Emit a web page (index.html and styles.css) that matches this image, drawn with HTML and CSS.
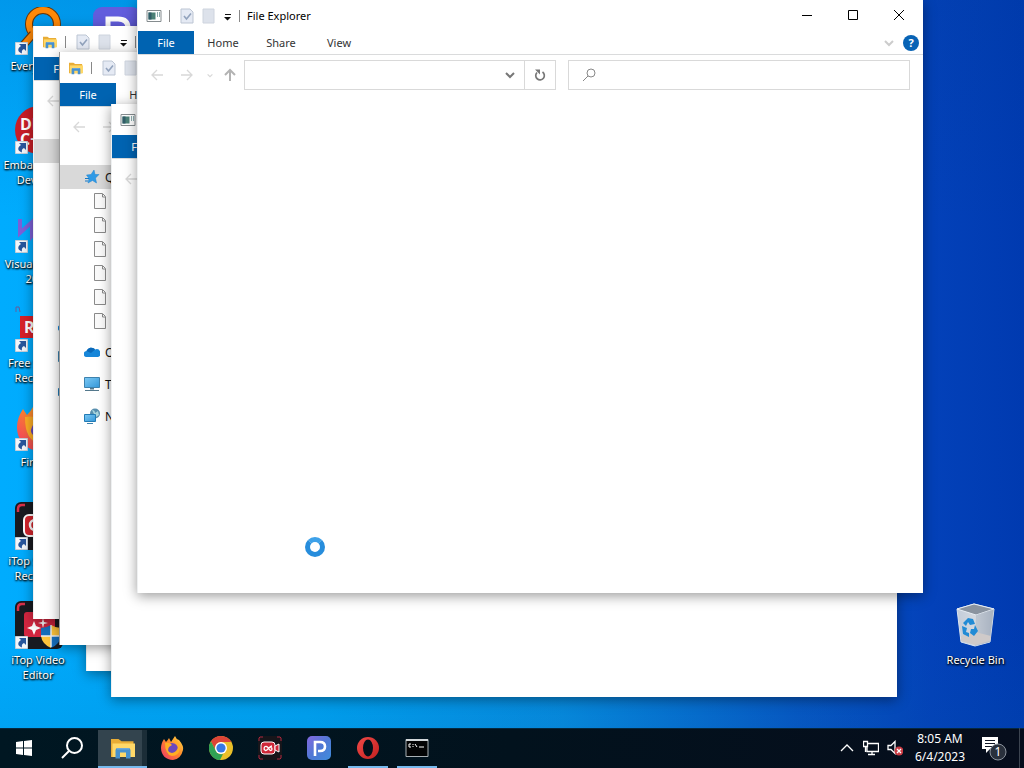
FILE: index.html
```html
<!DOCTYPE html>
<html lang="en">
<head>
<meta charset="utf-8">
<title>Desktop</title>
<link rel="stylesheet" href="styles.css">
</head>
<body>
<svg class="defs" aria-hidden="true">
  <defs>
    <linearGradient id="fire" x1="1" y1="0" x2="0" y2="1"><stop offset="0" stop-color="#ffe04a"/><stop offset=".45" stop-color="#ff8a2a"/><stop offset="1" stop-color="#f0306c"/></linearGradient>
    <linearGradient id="app" x1="0" y1="0" x2="1" y2="1"><stop offset="0" stop-color="#8468e0"/><stop offset=".5" stop-color="#5078d4"/><stop offset="1" stop-color="#3f8ddd"/></linearGradient>
    <linearGradient id="screen" x1="0" y1="0" x2="1" y2="1"><stop offset="0" stop-color="#7cc9f5"/><stop offset="1" stop-color="#3497d8"/></linearGradient>
    <linearGradient id="ring" x1="0" y1="0" x2="1" y2="1"><stop offset="0" stop-color="#f04a48"/><stop offset="1" stop-color="#c4201f"/></linearGradient>
    <linearGradient id="bin" x1="0" y1="0" x2="1" y2="0"><stop offset="0" stop-color="#c3ccda"/><stop offset=".55" stop-color="#d6dae0"/><stop offset="1" stop-color="#9ea8b8"/></linearGradient>
  </defs>
  <symbol id="shortcut" viewBox="0 0 13 13"><path fill="#f3f6fa" stroke="#c5ced8" d="M.5.5h12v12H.5z"/><path fill="#28569c" d="M4 2h7v7L9 7C7 8 6.500 9 7 11.500 2.500 10 2 6.500 6 4z"/></symbol>
  <symbol id="folder" viewBox="0 0 16 16"><path fill="#e9ad36" d="M0 2h5l2 1.500h8V14H0z"/><path fill="#ffd868" d="M1 5h15v9H1z"/><path fill="#4791cf" d="M3 15V9.500Q3 8 4.500 8h7Q13 8 13 9.500V15h-3v-4H6v4z"/><path fill="#6fa9d8" d="M4 8h8v1H4z"/></symbol>
  <symbol id="generic" viewBox="0 0 16 14"><path fill="#fff" stroke="#858c8f" d="M1 1.500h14v11H1z"/><path fill="#4b8177" d="M2.500 3.500h7v7h-7z"/><path fill="#315d68" d="M2.500 3.500h3v7h-3z"/><path stroke="#8caeb0" d="M11.500 3v5M13.500 3v5"/></symbol>
  <symbol id="check" viewBox="0 0 14 16"><path fill="#e5eaf4" stroke="#bcc5d3" d="M1 1h9l3 3v11H1z"/><path fill="none" stroke="#92a3bd" stroke-width="1.600" d="m4 8 2.500 3L11 5.500"/></symbol>
  <symbol id="blank" viewBox="0 0 14 16"><path fill="#dde2eb" stroke="#ced4de" d="M1 1h11v14H1z"/></symbol>
  <symbol id="drop" viewBox="0 0 8 10"><path fill="#111" d="M1 3h6v1H1zM0 6h7L3.500 9.500z"/></symbol>
  <symbol id="arrow-left" viewBox="0 0 12 12"><path fill="none" stroke="currentColor" stroke-width="1.300" d="M12 6H1m5-5L1 6l5 5"/></symbol>
  <symbol id="arrow-up" viewBox="0 0 12 14"><path fill="none" stroke="currentColor" stroke-width="2" d="M6 13V2M1 7l5-5 5 5"/></symbol>
  <symbol id="chev" viewBox="0 0 10 8"><path fill="none" stroke="currentColor" stroke-width="2" d="m1 2 4 4 4-4"/></symbol>
  <symbol id="star" viewBox="0 0 16 16"><path fill="#2f9ae6" stroke="#1c83d0" stroke-width=".5" d="m10 1 1 4.500h4L11.500 9l1 5L8.500 11.500 4 14l1-4.500L2.500 6l4.500-.500z"/><path stroke="#1679c5" stroke-width="1.200" d="M1 9.500h4M1 12h3"/></symbol>
  <symbol id="doc" viewBox="0 0 12 16"><path fill="#fafafa" stroke="#8a8a8a" d="M.5.5h8l3 3v12H.5z"/><path fill="none" stroke="#8a8a8a" d="M8.500 1v3H11"/></symbol>
  <symbol id="cloud" viewBox="0 0 16 12"><path fill="#1686d9" d="M3 11a3 3 0 0 1-.5-6A5 5 0 0 1 11 3.500 4 4 0 0 1 14 11z"/><path fill="#0a68b8" d="M2.500 5A5 5 0 0 1 11 3.500L7 7z"/></symbol>
  <symbol id="pc" viewBox="0 0 16 16"><path fill="url(#screen)" stroke="#3d82ae" d="M.5 1.500h15v10H.5z"/><path fill="#54788c" d="M6 12h4v1.500H6zM1 14h14v1H1z"/></symbol>
  <symbol id="net" viewBox="0 0 16 16"><circle cx="11" cy="5.500" r="5" fill="#598fae"/><path fill="#a9d5dd" d="M8 2q3 0 3 3l3-2 1 4-3 2-2-3z"/><path fill="url(#screen)" stroke="#227bb5" d="M.5 6.500h11v7H.5z"/><path stroke="#3d82ae" d="M3 15.500h6"/></symbol>
  <symbol id="firefox" viewBox="0 0 24 24"><path fill="url(#fire)" d="M1 12C1 9 2 6 4 3l2 3q2-2 3-4l2 4 4-6q1 3 4 4 5 6 4 10-2 9-10 10C6 24 1 19 1 12z"/><circle cx="12" cy="13" r="6" fill="#6a48bd"/><path fill="#ffae25" d="M5 7q5-1 7 2l-3 2q-3 5 3 6 5-1 6-6-1-5-5-8 7 2 7 9-1 8-8 8-7-1-7-13z"/></symbol>
  <symbol id="recorder" viewBox="0 0 48 48"><rect width="48" height="48" rx="6" fill="#181a20"/><path fill="none" stroke="#d8304a" stroke-width="2.500" d="M3 10V7q0-4 4-4h3m28 0h3q4 0 4 4v3M3 38v3q0 4 4 4h3m28 0h3q4 0 4-4v-3"/><rect x="9" y="13" width="24" height="21" rx="5" fill="#d4252d" stroke="#fff" stroke-width="2"/><path fill="#d4252d" stroke="#fff" stroke-width="2" d="m34 20 8-5v19l-8-5z"/><circle cx="20" cy="23" r="5" fill="none" stroke="#fff" stroke-width="2.500"/></symbol>
</svg>

<div class="screen">
  <main class="desktop">
    <nav class="shortcuts" aria-label="Desktop shortcuts">
      <a class="shortcut" href="#"><span class="picture"><svg class="art" viewBox="0 0 48 48"><circle cx="28" cy="17" r="14" fill="none" stroke="#65370b" stroke-width="8"/><circle cx="28" cy="17" r="14" fill="none" stroke="#ff8908" stroke-width="6"/><path stroke="#65370b" stroke-width="8" d="M18 27 4 43"/><path stroke="#ff8908" stroke-width="6" d="M19 26 5 42"/></svg><svg class="badge"><use href="#shortcut"/></svg></span><span class="label">Everything</span></a>
      <a class="shortcut" href="#"><span class="picture"><svg class="art" viewBox="0 0 48 48"><circle cx="24" cy="24" r="24" fill="#c91e27"/><text class="logo-text" x="5" y="24">DEV</text><text class="logo-text" x="5" y="39">C++</text></svg><svg class="badge"><use href="#shortcut"/></svg></span><span class="label">Embarcadero<br>Dev-C++</span></a>
      <a class="shortcut" href="#"><span class="picture"><svg class="art" viewBox="0 0 48 48"><path fill="none" stroke="#7d60d8" stroke-width="4" d="M5 14v14l12-11v14l13-14v14"/></svg><svg class="badge"><use href="#shortcut"/></svg></span><span class="label">Visual Studio<br>2022</span></a>
      <a class="shortcut" href="#"><span class="picture"><svg class="art" viewBox="0 0 48 48"><path fill="none" stroke="#665c9b" d="M1 8V3h3l1 5"/><path fill="#d82027" d="M5 12h38v22H5z"/><text class="logo-text" x="9" y="29">REC</text></svg><svg class="badge"><use href="#shortcut"/></svg></span><span class="label">Free Screen<br>Recorder</span></a>
      <a class="shortcut" href="#"><span class="picture"><svg class="art"><use href="#firefox"/></svg><svg class="badge"><use href="#shortcut"/></svg></span><span class="label">Firefox</span></a>
      <a class="shortcut" href="#"><span class="picture"><svg class="art"><use href="#recorder"/></svg><svg class="badge"><use href="#shortcut"/></svg></span><span class="label">iTop Screen<br>Recorder</span></a>
      <a class="shortcut" href="#"><span class="picture"><svg class="art" viewBox="0 0 48 48"><rect width="48" height="48" rx="6" fill="#181a20"/><path fill="none" stroke="#d8304a" stroke-width="2.500" d="M3 10V7q0-4 4-4h3"/><rect x="9" y="11" width="31" height="25" rx="3" fill="#d42640"/><path fill="#fff" d="m19 20 2 5 5 2-5 2-2 5-2-5-5-2 5-2zm9-3 1 4 4 1-4 1-1 4-1-4-4-1 4-1z"/><path fill="#176fbd" d="M26 27q5 0 10-3v12H26z"/><path fill="#ffc43b" d="M36 24q5 3 10 3v9H36zM26 35h10v12q-9-4-10-12z"/><path fill="#176fbd" d="M36 35h10q-1 8-10 12z"/><path stroke="#eee" stroke-width="1.500" d="M36 24v22M26 35h20"/></svg><svg class="badge"><use href="#shortcut"/></svg></span><span class="label">iTop Video<br>Editor</span></a>
      <a class="shortcut" href="#"><span class="picture"><svg class="art" viewBox="0 0 48 48"><rect width="48" height="48" rx="9" fill="#625ddd"/><path fill="none" stroke="#fff" stroke-width="5" d="M15 40V12h10q10 0 10 9t-10 9H15"/></svg></span></a>
    </nav>
    <a class="recycle" href="#"><svg class="bin" viewBox="0 0 48 48"><path fill="url(#bin)" stroke="#dce5ef" d="m5 8 17-5 20 5-4 33-15 4-14-4z"/><path fill="#8a939f" stroke="#e7edf4" d="m5 8 17-5 20 5-18 6z"/><path fill="#aeb7c5" opacity=".6" d="m24 14 18-6-4 33-15 4z"/><path fill="#cfcac9" d="m9 35 14-4 16 4-1 5-15 4-14-4z"/><g fill="#228bd5"><path d="m11 22 5-5 5 1 2 5-5 1-2-3-2 4z"/><path d="m10 25 5 2-1 4 3 1v4l-6-3z"/><path d="m23 24 3 6-4 5-4-3 1-4h3z"/></g></svg><span class="label">Recycle Bin</span></a>

    <section class="window w1" aria-label="File Explorer 1">
      <header class="titlebar"><svg class="app-icon"><use href="#folder"/></svg><i class="rule"></i><svg class="page-icon"><use href="#check"/></svg><svg class="page-icon"><use href="#blank"/></svg><svg class="drop"><use href="#drop"/></svg><i class="rule"></i></header>
      <div class="ribbon"><button class="file">File</button></div>
      <div class="tools"><svg class="arrow"><use href="#arrow-left"/></svg></div>
      <ul class="tree"><li class="selected"></li><li class="child"></li><li class="child"></li><li class="child"></li><li class="child"></li><li class="child"></li><li class="child"></li><li class="root"><svg><use href="#cloud"/></svg></li><li class="root"><svg><use href="#pc"/></svg></li><li class="root"><svg><use href="#net"/></svg></li></ul>
    </section>
    <section class="window w3" aria-label="File Explorer 3"></section>
    <section class="window w2" aria-label="File Explorer 2">
      <header class="titlebar"><svg class="app-icon"><use href="#folder"/></svg><i class="rule"></i><svg class="page-icon"><use href="#check"/></svg><svg class="page-icon"><use href="#blank"/></svg></header>
      <div class="ribbon"><button class="file">File</button><button>Home</button></div>
      <div class="tools"><svg class="arrow"><use href="#arrow-left"/></svg><svg class="arrow flip"><use href="#arrow-left"/></svg></div>
      <ul class="tree"><li class="selected"><svg><use href="#star"/></svg>Quick access</li><li class="child"><svg><use href="#doc"/></svg></li><li class="child"><svg><use href="#doc"/></svg></li><li class="child"><svg><use href="#doc"/></svg></li><li class="child"><svg><use href="#doc"/></svg></li><li class="child"><svg><use href="#doc"/></svg></li><li class="child"><svg><use href="#doc"/></svg></li><li class="root"><svg><use href="#cloud"/></svg>OneDrive</li><li class="root"><svg><use href="#pc"/></svg>This PC</li><li class="root"><svg><use href="#net"/></svg>Network</li></ul>
    </section>
    <section class="window w4" aria-label="File Explorer 4">
      <header class="titlebar"><svg class="app-icon"><use href="#generic"/></svg></header>
      <div class="ribbon"><button class="file">File</button></div>
      <div class="tools"><svg class="arrow"><use href="#arrow-left"/></svg></div>
    </section>
    <section class="window w5" aria-label="File Explorer">
      <header class="titlebar"><svg class="app-icon"><use href="#generic"/></svg><i class="rule"></i><svg class="page-icon"><use href="#check"/></svg><svg class="page-icon"><use href="#blank"/></svg><svg class="drop"><use href="#drop"/></svg><i class="rule"></i><h1>File Explorer</h1>
        <div class="controls"><button aria-label="Minimize"><svg viewBox="0 0 12 12"><path d="M1 5.500h10"/></svg></button><button aria-label="Maximize"><svg viewBox="0 0 12 12"><path d="M1.500.5h9v9h-9z"/></svg></button><button aria-label="Close"><svg viewBox="0 0 12 12"><path d="m1 0 10 10M11 0 1 10"/></svg></button></div>
      </header>
      <div class="ribbon"><button class="file">File</button><button>Home</button><button>Share</button><button>View</button><div class="help"><svg class="chev"><use href="#chev"/></svg><button aria-label="Help">?</button></div></div>
      <div class="tools"><svg class="arrow"><use href="#arrow-left"/></svg><svg class="arrow flip"><use href="#arrow-left"/></svg><svg class="tiny"><use href="#chev"/></svg><svg class="up"><use href="#arrow-up"/></svg>
        <div class="address"><input aria-label="Address"><svg class="chev"><use href="#chev"/></svg><button aria-label="Refresh"><svg viewBox="0 0 14 14"><path fill="none" stroke="#777" stroke-width="1.700" d="M9.500 4A4.300 4.300 0 1 1 4 4.500"/><path fill="#777" d="M2 1.500h5v5L5.500 5 4 3.500z"/></svg></button></div>
        <div class="search"><svg viewBox="0 0 14 14"><circle cx="9" cy="5" r="4"/><path d="M6 8 1 13"/></svg><input aria-label="Search"></div>
      </div>
    </section>
    <div class="busy" role="status" aria-label="Working"></div>
  </main>

  <footer class="taskbar">
    <button class="task start" aria-label="Start"><svg viewBox="0 0 16 16"><path fill="#fff" d="m0 2 7-1v6.500H0zm8-1 8-1v7.500H8zM0 8.500h7V15l-7-1zm8 0h8V16l-8-1z"/></svg></button>
    <button class="task search-task" aria-label="Search"><svg viewBox="0 0 22 22"><circle cx="13.500" cy="8.500" r="7.500" fill="none" stroke="#fff" stroke-width="2"/><path stroke="#fff" stroke-width="2" d="m8 14-7 7"/></svg></button>
    <button class="task active" aria-label="File Explorer"><svg><use href="#folder"/></svg></button>
    <button class="task" aria-label="Firefox"><svg><use href="#firefox"/></svg></button>
    <button class="task" aria-label="Chrome"><svg viewBox="0 0 24 24"><circle cx="12" cy="12" r="12" fill="#eabf29"/><path fill="#dc4437" d="M2 5.500Q5 0 12 0q7 0 10.400 6H12a6 6 0 0 0-5.500 8z"/><path fill="#30a254" d="M2 5.500 7 15a6 6 0 0 0 7 3l-3 6Q5 24 1.500 18-2 11 2 5.500z"/><circle cx="12" cy="12" r="6" fill="#fff"/><circle cx="12" cy="12" r="4.600" fill="#3779e5"/></svg></button>
    <button class="task" aria-label="Screen recorder"><svg viewBox="0 0 24 24"><rect width="24" height="24" rx="3" fill="#17151a"/><path fill="none" stroke="#a92840" d="M1 5V2l1-1h3m14 0h3l1 1v3M1 19v3l1 1h3m14 0h3l1-1v-3"/><rect x="3" y="6" width="14" height="12" rx="3" fill="#cf2838" stroke="#fff"/><path fill="#cf2838" stroke="#fff" d="m17 10 4-2v8l-4-2z"/><path fill="none" stroke="#fff" stroke-width="1.300" d="M14 10c-3 0-4 5-6.500 4.500-2.500-1-1.500-4.500 1-4 2 0 2.500 4 4 4 2 0 2-3 0-3"/></svg></button>
    <button class="task" aria-label="Photo app"><svg viewBox="0 0 24 24"><rect width="24" height="24" rx="5" fill="url(#app)"/><path fill="none" stroke="#fff" stroke-width="2.600" d="M8 20V6h5q5 0 5 4.500T13 15h-2"/></svg></button>
    <button class="task open" aria-label="Opera"><svg viewBox="0 0 24 24"><ellipse cx="12" cy="12" rx="11" ry="11" fill="url(#ring)"/><ellipse cx="12" cy="12" rx="5" ry="8.500" fill="#02101b"/></svg></button>
    <button class="task open" aria-label="Command Prompt"><svg viewBox="0 0 24 24"><path fill="#030405" stroke="#a9b0b4" d="M1 3.500h22v17H1z"/><path fill="#d2d7da" d="M1 3h22v2H1z"/><path fill="none" stroke="#fff" d="M6 8H4v3h2M8 8v1m0 1v1m2-3 2 3m2 0h5"/></svg></button>
    <div class="tray">
      <svg class="tray-icon" viewBox="0 0 16 16"><path d="m2 11 6-6 6 6"/></svg>
      <svg class="tray-icon" viewBox="0 0 16 16"><path d="M5 3.500h10.500v8H4V7M9 12v2.500M5 14.500h7M.5 1.500h4v5h-4zM2.500 7v5"/></svg>
      <svg class="tray-icon" viewBox="0 0 16 16"><path d="M1 5.500h3l4-4v12l-4-4H1z"/><circle cx="12" cy="11" r="4.500" fill="#ca3b43" stroke="none"/><path d="m10 9 4 4m0-4-4 4"/></svg>
      <time datetime="2023-06-04T08:05">8:05 AM<br>6/4/2023</time>
      <button class="notice" aria-label="1 notification"><svg viewBox="0 0 26 26"><path fill="#fff" d="M1 2h16v12H9l-4 4v-4H1z"/><path stroke="#101726" d="M4 5.500h10M4 8.500h10M4 11.500h7"/><circle cx="17" cy="17" r="8" fill="#29303c" stroke="#8b929c"/><text x="17" y="21" text-anchor="middle">1</text></svg></button>
    </div>
  </footer>
</div>
</body>
</html>
```
FILE: styles.css
```css
* { box-sizing: border-box; }
body { margin: 0; font: 11px/15px "Noto Sans", sans-serif; color: #111; }
button, input { font: inherit; border: 0; background: none; padding: 0; }
svg { display: block; flex: none; }
.defs { position: absolute; width: 0; height: 0; }
.screen { height: 100vh; display: flex; flex-direction: column; overflow: hidden; }
.desktop {
  position: relative; flex: 1; min-height: 0; overflow: hidden;
  background:
    linear-gradient(180deg, rgba(0, 60, 150, .18), transparent 30%, transparent 85%, rgba(0, 90, 160, .12)),
    linear-gradient(90deg, #00acfe 0%, #00a5f4 30%, #078ce0 55%, #0757c4 78%, #0341b9 91%, #003ab0 100%);
}
.shortcuts { height: 100%; padding-top: 7px; display: flex; flex-flow: column wrap; align-content: flex-start; }
.shortcut { width: 78px; height: 99px; flex: none; }
.shortcut, .recycle { color: #fff; text-decoration: none; text-align: center; }
.picture { position: relative; display: block; width: 48px; height: 48px; margin: 0 15px; }
.art { width: 48px; height: 48px; }
.badge { position: absolute; left: 0; bottom: 0; width: 13px; height: 13px; }
.label { display: block; margin: 3px 2px 0 0; text-shadow: 1px 1px 2px #000, 0 1px 2px #000; white-space: nowrap; }
.logo-text { font: bold 16px "Open Sans", sans-serif; fill: #fff; }
.recycle { position: absolute; right: 11px; bottom: 61px; width: 75px; }
.recycle .label { margin-right: 0; }
.bin { width: 48px; height: 48px; margin: 0 auto; }

.window {
  position: absolute; width: 786px; height: 593px; background: #fff;
  border-left: 1px solid #eef0f1; box-shadow: 0 3px 12px rgba(0, 0, 0, .4); overflow: hidden;
}
.w1 { left: 33px; top: 26px; }
.w2 { left: 59px; top: 52px; border-left-color: #999; }
.w3 { left: 86px; top: 78px; }
.w4 { left: 111px; top: 104px; }
.w5 { left: 137px; top: 0; }
.titlebar { height: 31px; display: flex; align-items: center; padding-left: 8px; }
.titlebar h1 { margin: 0 auto 0 7px; font: inherit; color: #000; }
.app-icon { width: 16px; height: 14px; }
.rule { width: 1px; height: 12px; background: #888; margin: 0 8px; }
.app-icon + .rule { margin: 0 10px 0 7px; }
.drop + .rule { margin: 0 0 0 7px; }
.page-icon { width: 14px; height: 16px; margin-right: 8px; }
.drop { width: 8px; height: 10px; }
.controls { display: flex; height: 100%; }
.controls button { width: 46px; display: grid; place-items: center; }
.controls svg { width: 12px; height: 12px; fill: none; stroke: #000; }
.w5 .controls { padding-right: 1px; }
.ribbon { height: 24px; display: flex; border-bottom: 1px solid #dadbdc; color: #333; }
.ribbon > button { width: 58px; color: #333; }
.ribbon > .file { width: 56px; background: #0063b1; color: #fff; }
.chev { width: 10px; height: 8px; color: #777; }
.help { margin-left: auto; padding-right: 4px; display: flex; align-items: center; gap: 9px; }
.help .chev { color: #ccc; }
.help button { width: 16px; height: 16px; border-radius: 50%; background: #0863b5; color: #fff; font-weight: bold; line-height: 16px; }
.tools { height: 40px; padding: 0 13px; display: flex; align-items: center; color: #d8d8d8; }
.arrow { width: 12px; height: 12px; margin-right: 18px; }
.flip { transform: scaleX(-1); margin-right: 14px; }
.tiny { width: 6px; height: 5px; margin-right: 11px; }
.up { width: 12px; height: 14px; margin-right: 8px; color: #b3b3b3; }
.address, .search { height: 30px; border: 1px solid #d9d9d9; display: flex; align-items: center; }
.address { flex: 312 1 0; margin-right: 12px; }
.search { flex: 342 1 0; }
.address input, .search input { flex: 1; min-width: 0; height: 100%; }
.address .chev { margin-right: 9px; }
.address button { width: 31px; height: 100%; border-left: 1px solid #d9d9d9; display: grid; place-items: center; }
.address button svg { width: 14px; height: 14px; }
.search svg { width: 14px; height: 14px; margin-left: 13px; fill: none; stroke: #888; }
.tree { margin: 0; padding: 18px 0 0; list-style: none; font-size: 12px; }
.tree li { height: 24px; padding-left: 24px; display: flex; align-items: center; gap: 5px; white-space: nowrap; }
.tree .selected { background: #d9d9d9; width: 180px; }
.tree svg { width: 16px; height: 16px; }
.tree .child { padding-left: 32px; }
.tree .root { height: 32px; }
.tree .child + .root { margin-top: 3px; }
.busy { position: absolute; left: 305px; top: 537px; width: 20px; height: 20px; border: 5px solid #278ddc; border-top-color: #3da1e9; border-radius: 50%; background: #fff; }

.taskbar { position: relative; height: 40px; flex: none; display: flex; background: linear-gradient(90deg, #001722, #02121d 50%, #060d1c); box-shadow: inset 0 1px #05283f; }
.task { width: 49px; height: 40px; display: grid; place-items: center; border-bottom: 2px solid transparent; border-top: 2px solid transparent; }
.task svg { width: 24px; height: 24px; }
.start { width: 48px; }
.start svg { width: 16px; height: 16px; }
.search-task { width: 50px; padding-right: 3px; }
.search-task svg { width: 22px; height: 22px; }
.active { border-bottom-color: #76b9ed; background: linear-gradient(90deg, #33444e 44px, #1b2d37 44px) padding-box; }
.open { background: linear-gradient(#76b9ed, #76b9ed) center bottom / 40px 2px no-repeat border-box; }
.tray { margin-left: auto; display: flex; align-items: center; color: #fff; font-size: 12px; line-height: 18px; text-align: center; gap: 8px; }
.tray-icon { width: 16px; height: 16px; fill: none; stroke: #fff; stroke-width: 1.300; }
.tray time { width: 58px; white-space: nowrap; }
.notice { width: 43px; height: 100%; padding-left: 4px; border-right: 1px solid #3c4450; margin-right: 4px; }
.notice svg { width: 26px; height: 26px; }
.notice text { font: 12px "Noto Sans", sans-serif; fill: #fff; }
```
